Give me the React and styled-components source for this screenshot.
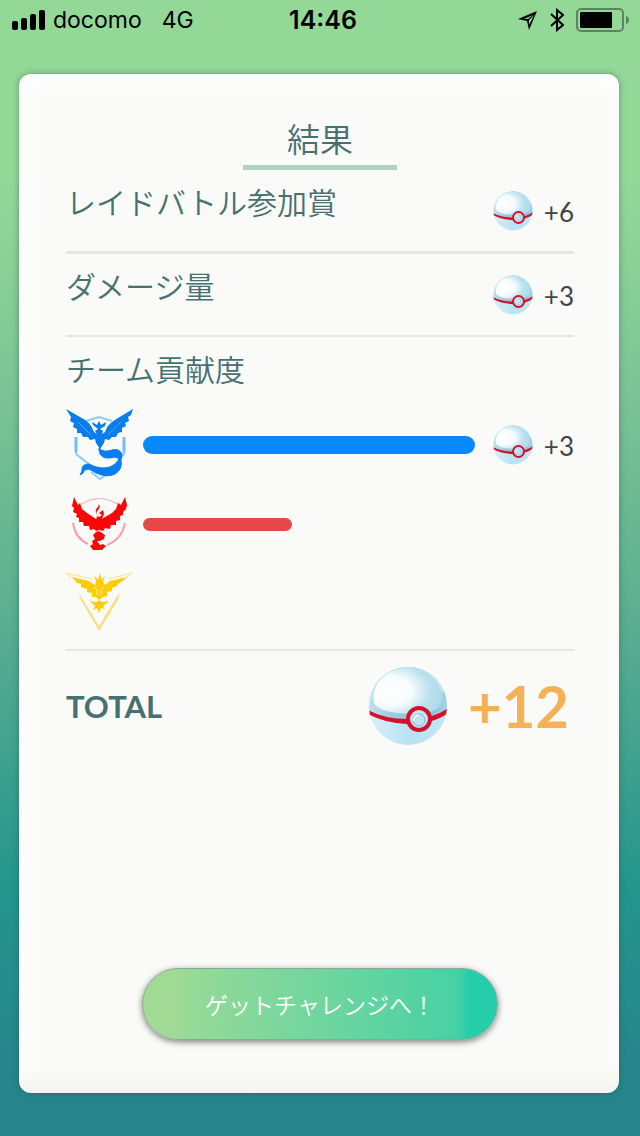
import React from "react";
import styled, { createGlobalStyle } from "styled-components";

const jp = `Lato, "Noto Sans CJK JP", sans-serif`;
const jpSoft = `"Noto Sans CJK JP DemiLight", "Noto Sans CJK JP", sans-serif`;

const GlobalStyle = createGlobalStyle`
  * { box-sizing: border-box; }
  body { margin: 0; font-family: ${jp}; color: #477071; }
`;

const Screen = styled.div`
  min-height: 100vh;
  display: flex;
  flex-direction: column;
  background: linear-gradient(180deg, #94d898 0%, #94d898 16%, #79c295 36%, #56ab90 57%, #24968c 78%, #26868c 93%, #26848c 100%);
`;

const StatusBar = styled.header`
  height: 40px;
  padding: 0 11px 0 12px;
  display: grid;
  grid-template-columns: 1fr auto 1fr;
  align-items: center;
  color: #000;
  font: 23px/40px Inter, sans-serif;
`;

const StatusGroup = styled.div`
  display: flex;
  align-items: center;
  justify-content: ${(p) => (p.$end ? "flex-end" : "flex-start")};
  gap: ${(p) => (p.$end ? 12 : 8)}px;
`;

const Network = styled.span`
  margin-left: 12px;
`;

const Clock = styled.time`
  padding-left: 5px;
  font-size: 25px;
  font-weight: 600;
`;

const Card = styled.main`
  flex: 1;
  margin: 34px 21px 43px 19px;
  padding: 40px 45px 53px 47px;
  display: flex;
  flex-direction: column;
  border-radius: 12px;
  background:
    linear-gradient(180deg, #fff 0, rgba(255, 255, 255, 0) 24px),
    linear-gradient(0deg, #f3f4ef 0, rgba(243, 244, 239, 0) 24px),
    linear-gradient(90deg, #fdfdfd 0, #fafaf8 24px, #fafaf8 calc(100% - 24px), #fbfbf9 100%);
  box-shadow: 0 0 6px rgba(30, 90, 70, 0.5);
`;

const Title = styled.h1`
  align-self: center;
  min-width: 154px;
  margin: 0;
  padding-bottom: 3px;
  border-bottom: 5px solid #afd3be;
  font-family: ${jpSoft};
  font-size: 33px;
  line-height: 48px;
  font-weight: 350;
  text-align: center;
`;

const Section = styled.section`
  min-height: ${(p) => p.$height}px;
  border-bottom: ${(p) => p.$line || 2}px solid #e7e8e6;
`;

const SectionRow = styled.div`
  display: flex;
  justify-content: space-between;
  padding-top: 8px;
`;

const Label = styled.h2`
  margin: 0;
  font-family: ${jpSoft};
  font-size: 30px;
  line-height: 46px;
  font-weight: 350;
`;

const RewardBox = styled.div`
  display: flex;
  align-items: center;
  justify-content: space-between;
  flex: none;
  width: 81px;
  height: 40px;
  margin-top: ${(p) => (p.$low ? 13 : 0)}px;
  color: #444;
  font-size: 26px;
  line-height: 42px;
`;

const RewardAmount = styled.span`
  padding-top: 2px;
`;

const TeamList = styled.ul`
  list-style: none;
  margin: 0;
  padding: 14px 0 8px;
`;

const TeamRow = styled.li`
  display: flex;
  align-items: center;
  height: ${(p) => p.$height}px;
`;

const Track = styled.div`
  flex: 1;
  margin: 0 18px 0 10px;
`;

const Bar = styled.div`
  height: ${(p) => p.$height}px;
  border-radius: 9px;
  background: ${(p) => p.$color};
`;

const RewardSpace = styled.div`
  width: 81px;
  flex: none;
`;

const Total = styled.section`
  display: flex;
  align-items: center;
  height: 110px;
  padding-right: 5px;
`;

const TotalLabel = styled.h2`
  margin: 0 auto 0 0;
  font-size: 31px;
  line-height: 40px;
  font-weight: 700;
`;

const TotalValue = styled.strong`
  margin-left: 20px;
  color: #f4b155;
  font-size: 58px;
  line-height: 72px;
  font-weight: 700;
`;

const Action = styled.button`
  align-self: center;
  width: 356px;
  max-width: 100%;
  height: 72px;
  margin-top: auto;
  padding: 0;
  border: 1px solid #8aa997;
  border-radius: 36px;
  background: linear-gradient(90deg, #a3da94 0%, #a1da95 10%, #98da97 12%, #47d1a5 89%, #25cdab 92%, #25cdab 100%);
  box-shadow: 0 2px 6px rgba(0, 0, 0, 0.5);
  color: #fff;
  font-family: ${jpSoft};
  font-size: 23px;
  font-weight: 350;
`;

const Icon = styled.svg`
  display: block;
  flex: none;
`;

function Ball({ size, id }) {
  return (
    <Icon width={size} height={size} viewBox="0 0 80 80" aria-hidden="true">
      <defs>
        <radialGradient id={`${id}-top`} cx="0.22" cy="0.5" r="0.85">
          <stop offset="0" stopColor="#fff" />
          <stop offset="0.4" stopColor="#f5fbfd" />
          <stop offset="0.7" stopColor="#bce1ee" />
          <stop offset="1" stopColor="#a9d8e8" />
        </radialGradient>
        <linearGradient id={`${id}-rim`} x1="0" y1="0" x2="1" y2="0">
          <stop offset="0" stopColor="#bfe2ee" />
          <stop offset="0.3" stopColor="#9ccbdc" />
          <stop offset="0.75" stopColor="#86bcd2" />
          <stop offset="1" stopColor="#a5d6e8" />
        </linearGradient>
        <linearGradient id={`${id}-low`} x1="0" y1="0" x2="1" y2="0">
          <stop offset="0" stopColor="#d9f0f8" />
          <stop offset="0.5" stopColor="#b9e3f2" />
          <stop offset="1" stopColor="#bfe7f4" />
        </linearGradient>
        <clipPath id={`${id}-clip`}><circle cx="40" cy="40" r="39" /></clipPath>
      </defs>
      <g clipPath={`url(#${id}-clip)`}>
        <rect width="80" height="80" fill={`url(#${id}-low)`} />
        <path d="M0 0H80V44Q66 55 40 55Q17 55 0 46Z" fill={`url(#${id}-rim)`} />
        <path d="M0 0H80V26L75 27C60 12 20 10 5 33L0 34Z" fill="#c7e6f0" />
        <path d="M6 37C3 16 20 2 40 2C61 2 77 20 74 37C70 45 60 48 44 48C25 48 9 44 6 37Z" fill={`url(#${id}-top)`} />
        <path d="M0 44Q16 53 39 53Q64 54 80 42V47Q66 58 39 58Q16 57 0 48Z" fill="#d5102c" />
      </g>
      <circle cx="51" cy="53" r="11" fill="#c3e5f1" stroke="#d5102c" strokeWidth="4" />
      <circle cx="51" cy="54" r="6" fill="#bfe3f3" stroke="#7db9d4" strokeWidth="1" />
      <path d="M46 55A5 5 0 0 1 51 49" fill="none" stroke="#fff" strokeWidth="1.5" />
    </Icon>
  );
}

function Reward({ amount, id, low }) {
  return (
    <RewardBox $low={low}>
      <Ball size={40} id={id} />
      <RewardAmount>+{amount}</RewardAmount>
    </RewardBox>
  );
}

function Mystic() {
  return (
    <Icon width="67" height="72" viewBox="0 0 67 72" role="img" aria-label="Mystic">
      <path d="M20 12L33 8L46 12M10 30V45L24 56M58 30V45L55 49M25 63L34 70L44 63" fill="none" stroke="#8ccbff" strokeWidth="2" />
      <path d="M10 28V43M58 28V43" stroke="#75bcff" strokeWidth="3" />
      <path d="M0 0L14 8Q25 13 28 23L31 25L29 22L32 20L27 16L26 13L31 16L33 12L35 16L40 13L39 17L34 20L37 22L36 25L39 23Q41 15 52 9L67 0L65 6L62 8L63 12L59 14L60 17L56 19L56 23L52 24L50 28L46 28L43 31L39 30L38 34L34 40L30 34L29 30L24 31L22 28L17 28L15 24L11 24L11 20L7 18L8 14L4 12L5 8Z" fill="#087dec" />
      <path d="M12 13L25 26M55 13L42 26" stroke="#4ba3f2" strokeWidth="1" />
      <path d="M33 39Q37 44 46 41Q53 39 56 45L55 51Q57 60 49 65Q41 69 30 64L23 60Q18 60 17 64L14 66L16 62Q15 55 23 55Q34 61 44 58Q51 55 53 50Q50 47 44 49Q34 50 33 41Z" fill="#087dec" stroke="#087dec" strokeWidth="1" />
    </Icon>
  );
}

function Valor() {
  return (
    <Icon width="67" height="54" viewBox="0 0 67 54" role="img" aria-label="Valor">
      <path d="M15 7Q33-4 52 7" fill="none" stroke="#ffabb6" strokeWidth="1" />
      <path d="M7 26Q9 41 22 47M59 26Q56 42 41 48" fill="none" stroke="#ff9dad" strokeWidth="2" />
      <path d="M8 0L12 8L14 6L16 12L21 16L27 20L33 24L39 20L46 16L50 12L52 6L55 8L59 0L61 8L60 12L57 15L57 18L54 19L54 23L50 24L50 28L45 28L44 32L39 31L37 34L33 33L30 34L28 32L24 33L23 29L18 29L17 25L13 25L13 21L10 20L11 17L7 15L8 11L6 9Z" fill="#fb0708" />
      <path d="M33 7Q35 11 31 14Q29 19 33 20L36 18L33 16L37 13L38 17Q36 20 36 24L33 28L30 23L31 19Q28 13 32 10Z" fill="#fb0708" />
      <path d="M33 34L39 38L38 42L34 44L31 44L34 48L37 47L40 49L36 53L27 53L24 49L27 47L26 44L29 42L27 38L30 35Z" fill="#fb0708" />
    </Icon>
  );
}

function Instinct() {
  return (
    <Icon width="67" height="60" viewBox="0 0 67 60" role="img" aria-label="Instinct">
      <path d="M0 1L26 7M66 1L42 7M0 1L8 7M66 1L58 7" fill="none" stroke="#fae48d" strokeWidth="1" />
      <path d="M12 20L15 28L33 59L52 28L54 20L50 26L33 54L16 26Z" fill="#f8df85" />
      <path d="M6 5L23 9L29 13L30 9L28 3L32 8L34 1L36 8L39 3L37 10L39 13L44 9L61 5L55 10L52 12L51 14L46 16L46 19L41 20L41 24L37 25L33 28L30 25L26 25L26 21L21 20L21 17L15 15L15 12L11 11Z" fill="#ffcc08" />
      <path d="M28 15L31 18L31 23M38 15L35 18L35 23" fill="none" stroke="#fff3ac" strokeWidth="1" />
      <path d="M24 29L31 30L33 28L36 30L43 29L37 34L39 37L35 36L33 41L31 36L27 38L29 34Z" fill="#ffcc08" />
    </Icon>
  );
}

const teams = [
  { name: "mystic", Emblem: Mystic, share: 100, bar: 18, row: 80, color: "#0789fc", reward: 3 },
  { name: "valor", Emblem: Valor, share: 45, bar: 13, row: 78, color: "#e64848" },
  { name: "instinct", Emblem: Instinct, share: 0, bar: 13, row: 78, color: "#ffcc08" },
];

export default function App() {
  return (
    <>
      <GlobalStyle />
      <Screen>
        <StatusBar>
          <StatusGroup>
            <Icon width="33" height="20" viewBox="0 0 33 20" aria-hidden="true">
              <rect x="0" y="11" width="6" height="9" rx="2" />
              <rect x="9" y="8" width="6" height="12" rx="2" />
              <rect x="18" y="4" width="6" height="16" rx="2" />
              <rect x="27" y="0" width="6" height="20" rx="2" />
            </Icon>
            <span>docomo</span>
            <Network>4G</Network>
          </StatusGroup>
          <Clock>14:46</Clock>
          <StatusGroup $end>
            <Icon width="20" height="20" viewBox="0 0 20 20" aria-hidden="true">
              <path fillRule="evenodd" d="M19 1L0 9L9 11L11 20ZM15 5L10 9L6 9ZM16 5L11 15L11 10Z" />
            </Icon>
            <Icon width="14" height="24" viewBox="0 0 14 24" aria-hidden="true">
              <path d="M1 6L13 17L7 22V2L13 7L1 18" fill="none" stroke="#000" strokeWidth="2" />
            </Icon>
            <Icon width="53" height="24" viewBox="0 0 53 24" aria-hidden="true">
              <rect x="1" y="1" width="46" height="22" rx="4" fill="none" stroke="#5b8560" strokeWidth="2" />
              <rect x="4" y="4" width="32" height="16" rx="1" />
              <path d="M50 8Q53 9 53 12Q53 15 50 16Z" fill="#5b8560" />
            </Icon>
          </StatusGroup>
        </StatusBar>
        <Card>
          <Title>結果</Title>
          <Section $height={84} $line={3}>
            <SectionRow>
              <Label>レイドバトル参加賞</Label>
              <Reward amount={6} id="raid" low />
            </SectionRow>
          </Section>
          <Section $height={83}>
            <SectionRow>
              <Label>ダメージ量</Label>
              <Reward amount={3} id="damage" low />
            </SectionRow>
          </Section>
          <Section>
            <SectionRow>
              <Label>チーム貢献度</Label>
            </SectionRow>
            <TeamList>
              {teams.map(({ name, Emblem, share, bar, row, color, reward }) => (
                <TeamRow key={name} $height={row}>
                  <Emblem />
                  <Track>
                    <Bar $height={bar} $color={color} style={{ width: `${share}%` }} />
                  </Track>
                  {reward ? <Reward amount={reward} id={name} /> : <RewardSpace />}
                </TeamRow>
              ))}
            </TeamList>
          </Section>
          <Total>
            <TotalLabel>TOTAL</TotalLabel>
            <Ball size={80} id="total" />
            <TotalValue>+12</TotalValue>
          </Total>
          <Action type="button">ゲットチャレンジへ！</Action>
        </Card>
      </Screen>
    </>
  );
}
